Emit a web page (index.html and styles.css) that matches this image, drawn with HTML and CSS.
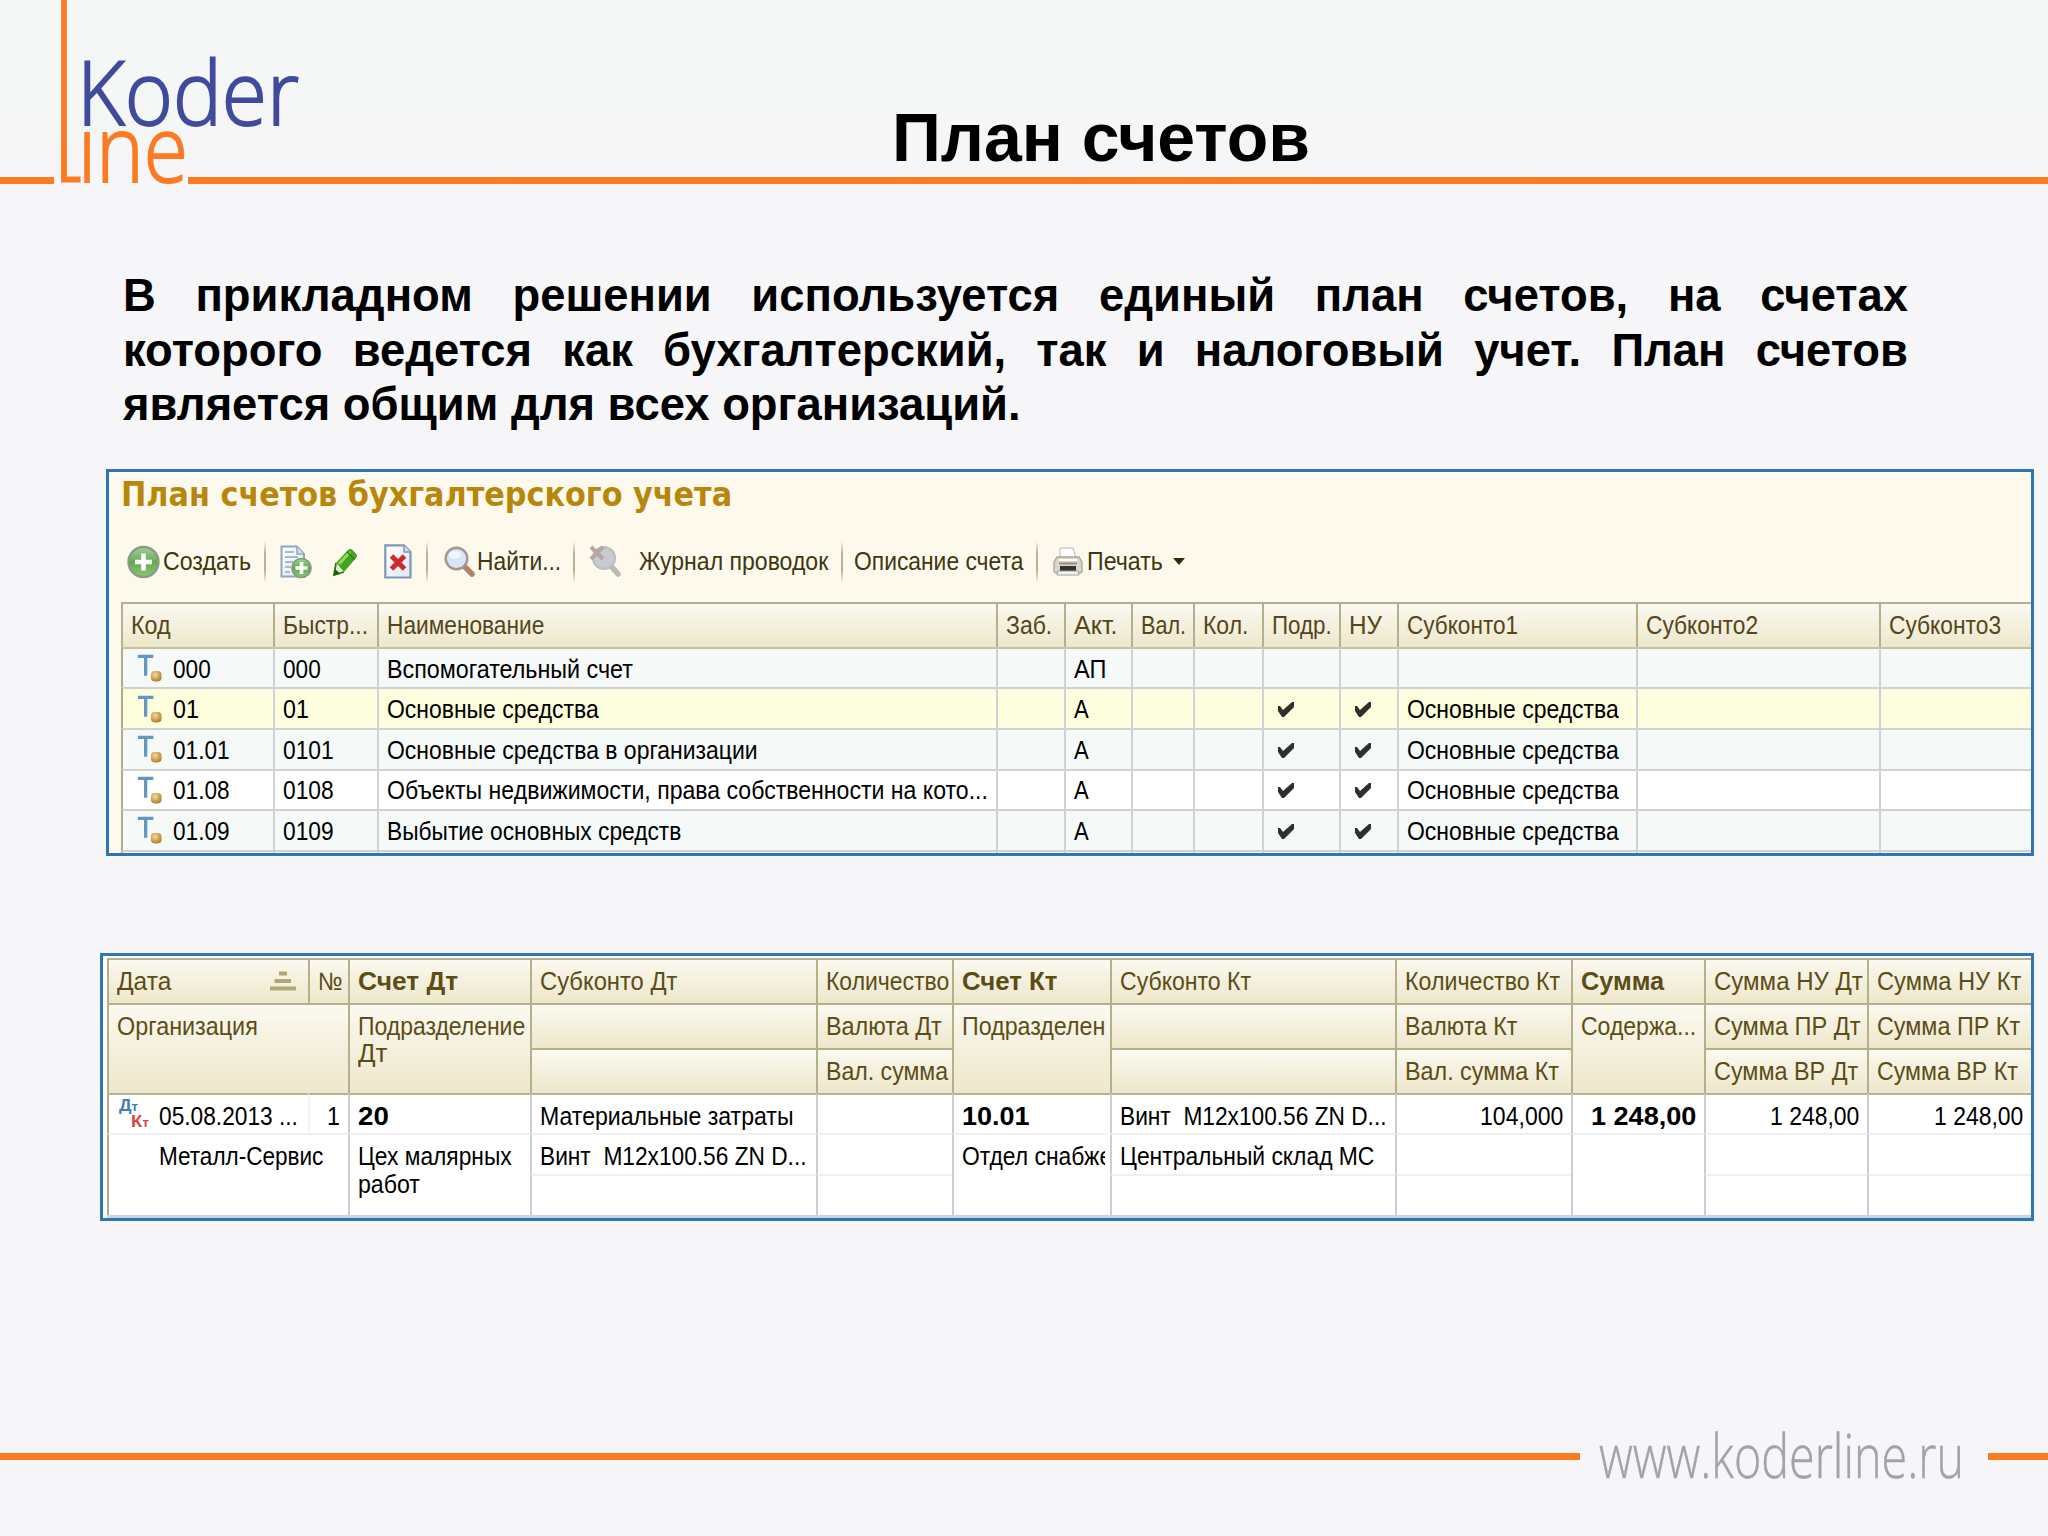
FILE: index.html
```html
<!DOCTYPE html>
<html lang="ru">
<head>
    <meta charset="UTF-8">
    <meta name="viewport" content="width=device-width, initial-scale=1.0">
    <title>План счетов</title>
    <link rel="stylesheet" href="styles.css">
</head>
<body>
    <!-- shared icons -->
    <svg class="defs" width="0" height="0">
        <defs>
            <linearGradient id="green" x1="0" y1="0" x2="0" y2="1">
                <stop offset="0" stop-color="#a9cf9c"/>
                <stop offset="0.5" stop-color="#63ab50"/>
                <stop offset="1" stop-color="#8cc67a"/>
            </linearGradient>
            <radialGradient id="gold" cx="0.4" cy="0.35" r="0.7">
                <stop offset="0" stop-color="#f6dc9a"/>
                <stop offset="1" stop-color="#b07a24"/>
            </radialGradient>
            <linearGradient id="paper" x1="0" y1="0" x2="1" y2="1">
                <stop offset="0" stop-color="#ffffff"/>
                <stop offset="1" stop-color="#dfe8f4"/>
            </linearGradient>
        </defs>
        <symbol id="account" viewBox="0 0 26 28">
            <path d="M1 2H17M9 2V22" stroke="#6497bd" stroke-width="3.4" fill="none"/>
            <rect x="14.5" y="17" width="11" height="11" rx="4" fill="url(#gold)"/>
        </symbol>
        <symbol id="check" viewBox="0 0 16 15">
            <path d="M0 4L2 4L5 8L14 0H16V5L6 15H4L0 9Z" fill="#2f2f2c"/>
        </symbol>
    </svg>

    <header class="header">
        <svg class="logo" width="320" height="190" viewBox="0 0 320 190">
            <path d="M0 180.5H54M188 180.5H320" stroke="#fb7a22" stroke-width="7"/>
            <path d="M64 0V179.5H80.5" stroke="#fb7a22" stroke-width="5.8" fill="none"/>
            <text class="logo-koder" x="77" y="125" textLength="222" lengthAdjust="spacingAndGlyphs">Koder</text>
            <text class="logo-ine" x="78" y="182" textLength="110" lengthAdjust="spacingAndGlyphs">ıne</text>
        </svg>
        <h1 class="title">План счетов</h1>
    </header>

    <main class="content">
        <p class="intro">
            <span>В прикладном решении используется единый план счетов, на счетах</span>
            <span>которого ведется как бухгалтерский, так и налоговый учет. План счетов</span>
            <span>является общим для всех организаций.</span>
        </p>

        <section class="panel accounts">
            <h2 class="panel-title"><span data-w="611">План счетов бухгалтерского учета</span></h2>

            <div class="toolbar">
                <div class="tool create">
                    <svg width="33" height="34" viewBox="0 0 33 34">
                        <circle cx="16.5" cy="17" r="15" fill="url(#green)" stroke="#8a9a84" stroke-width="2.4"/>
                        <path d="M16.5 8.5V25.5M8 17H25" stroke="#fff" stroke-width="4.6"/>
                    </svg>
                    <span data-w="88">Создать</span>
                </div>
                <i class="sep"></i>
                <div class="tool copy">
                    <svg width="32" height="34" viewBox="0 0 32 34">
                        <path d="M1.5 1.5H17L24 9V31.5H1.5Z" fill="url(#paper)" stroke="#8fa7bd" stroke-width="2"/>
                        <path d="M17 1.5V9H24" fill="#cddbea" stroke="#8fa7bd" stroke-width="1.5"/>
                        <path d="M5 7H14M5 12H18M5 17H13M5 22H11M5 27H10" stroke="#a9b9ca" stroke-width="1.8"/>
                        <circle cx="21.5" cy="23" r="9.5" fill="url(#green)" stroke="#7f9878" stroke-width="1.6"/>
                        <path d="M21.5 17V29M15.5 23H27.5" stroke="#fff" stroke-width="3.6"/>
                    </svg>
                </div>
                <div class="tool edit">
                    <svg width="25" height="28" viewBox="0 0 25 28">
                        <path d="M3 15L15 2Q17 0 19.5 2L23 5.5Q25 8 23 10L11 24Z" fill="#43a51f"/>
                        <path d="M6 16L17 4" stroke="#8ddb5c" stroke-width="3"/>
                        <path d="M14 3.5L21.5 11.5" stroke="#2f7d14" stroke-width="1.6"/>
                        <path d="M3 15L11 24L1 27Z" fill="#dff0cf"/>
                        <path d="M3 15L1 27L11 24" fill="none" stroke="#2c7a15" stroke-width="1.8"/>
                        <path d="M2 21L7 25.5L1 27.5Z" fill="#1d5a0c"/>
                    </svg>
                </div>
                <div class="tool delete">
                    <svg width="28" height="35" viewBox="0 0 28 35">
                        <path d="M1.3 1.3H20L26.5 8V33.5H1.3Z" fill="url(#paper)" stroke="#7d97b8" stroke-width="2.2"/>
                        <path d="M20 1.3V8H26.5" fill="#cddbea" stroke="#7d97b8" stroke-width="1.5"/>
                        <path d="M7.5 12L20.5 25M20.5 12L7.5 25" stroke="#cf2b2b" stroke-width="5"/>
                    </svg>
                </div>
                <i class="sep"></i>
                <div class="tool find">
                    <svg width="31" height="31" viewBox="0 0 31 31">
                        <path d="M20 20L28 28" stroke="#b08267" stroke-width="5.5" stroke-linecap="round"/>
                        <circle cx="12.5" cy="12.5" r="10.8" fill="#d6e6f8" stroke="#a9948f" stroke-width="2.4"/>
                        <ellipse cx="11" cy="9" rx="6" ry="4" fill="#eef6fe"/>
                    </svg>
                    <span data-w="84">Найти...</span>
                </div>
                <i class="sep"></i>
                <div class="tool find-off">
                    <svg width="33" height="33" viewBox="0 0 33 33">
                        <path d="M22 21L29 29" stroke="#bab9b2" stroke-width="5.5" stroke-linecap="round"/>
                        <circle cx="15" cy="13" r="11" fill="#c7cbd2" stroke="#bdbdba" stroke-width="2"/>
                        <path d="M2 2L14 14M14 2L2 14" stroke="#b8a3a6" stroke-width="4"/>
                    </svg>
                </div>
                <div class="tool journal"><span data-w="189">Журнал проводок</span></div>
                <i class="sep"></i>
                <div class="tool about"><span data-w="169">Описание счета</span></div>
                <i class="sep"></i>
                <div class="tool print">
                    <svg width="30" height="29" viewBox="0 0 30 29">
                        <path d="M7 1H20L23 11H7Z" fill="#fff" stroke="#b5b5b5"/>
                        <path d="M4 10H26L29 15V24Q29 26 26 26H4Q1 26 1 24V15Z" fill="#d9d5cb" stroke="#aaa69e" stroke-width="1.3"/>
                        <path d="M6 13H24" stroke="#fff" stroke-width="2"/>
                        <path d="M6 16.5H24" stroke="#a08c80" stroke-width="2"/>
                        <rect x="7" y="19" width="16" height="5" fill="#333"/>
                        <path d="M5 24H25L26 28H4Z" fill="#f3f3f3" stroke="#9c9c9c"/>
                    </svg>
                    <span data-w="76">Печать</span>
                    <i class="caret"></i>
                </div>
            </div>

            <div class="accounts-table">
                <div class="row head">
                    <div><span data-w="40">Код</span></div>
                    <div><span data-w="85">Быстр...</span></div>
                    <div><span data-w="157">Наименование</span></div>
                    <div><span data-w="46">Заб.</span></div>
                    <div><span data-w="44">Акт.</span></div>
                    <div><span data-w="45">Вал.</span></div>
                    <div><span data-w="45">Кол.</span></div>
                    <div><span data-w="60">Подр.</span></div>
                    <div><span data-w="33">НУ</span></div>
                    <div><span data-w="111">Субконто1</span></div>
                    <div><span data-w="112">Субконто2</span></div>
                    <div><span data-w="112">Субконто3</span></div>
                </div>
                <div class="row">
                    <div class="code"><svg><use href="#account"/></svg><span data-w="38">000</span></div>
                    <div><span data-w="38">000</span></div>
                    <div><span data-w="246">Вспомогательный счет</span></div>
                    <div></div>
                    <div><span data-w="32">АП</span></div>
                    <div></div><div></div><div></div><div></div><div></div><div></div><div></div>
                </div>
                <div class="row selected">
                    <div class="code"><svg><use href="#account"/></svg><span data-w="26">01</span></div>
                    <div><span data-w="26">01</span></div>
                    <div><span data-w="212">Основные средства</span></div>
                    <div></div>
                    <div><span data-w="15">А</span></div>
                    <div></div><div></div>
                    <div class="mark"><svg><use href="#check"/></svg></div>
                    <div class="mark"><svg><use href="#check"/></svg></div>
                    <div><span data-w="212">Основные средства</span></div>
                    <div></div><div></div>
                </div>
                <div class="row">
                    <div class="code"><svg><use href="#account"/></svg><span data-w="57">01.01</span></div>
                    <div><span data-w="51">0101</span></div>
                    <div><span data-w="371">Основные средства в организации</span></div>
                    <div></div>
                    <div><span data-w="15">А</span></div>
                    <div></div><div></div>
                    <div class="mark"><svg><use href="#check"/></svg></div>
                    <div class="mark"><svg><use href="#check"/></svg></div>
                    <div><span data-w="212">Основные средства</span></div>
                    <div></div><div></div>
                </div>
                <div class="row white">
                    <div class="code"><svg><use href="#account"/></svg><span data-w="57">01.08</span></div>
                    <div><span data-w="51">0108</span></div>
                    <div><span data-w="601">Объекты недвижимости, права собственности на кото...</span></div>
                    <div></div>
                    <div><span data-w="15">А</span></div>
                    <div></div><div></div>
                    <div class="mark"><svg><use href="#check"/></svg></div>
                    <div class="mark"><svg><use href="#check"/></svg></div>
                    <div><span data-w="212">Основные средства</span></div>
                    <div></div><div></div>
                </div>
                <div class="row">
                    <div class="code"><svg><use href="#account"/></svg><span data-w="57">01.09</span></div>
                    <div><span data-w="51">0109</span></div>
                    <div><span data-w="294">Выбытие основных средств</span></div>
                    <div></div>
                    <div><span data-w="15">А</span></div>
                    <div></div><div></div>
                    <div class="mark"><svg><use href="#check"/></svg></div>
                    <div class="mark"><svg><use href="#check"/></svg></div>
                    <div><span data-w="212">Основные средства</span></div>
                    <div></div><div></div>
                </div>
                <!-- top edge of the next row, cut by the panel -->
                <div class="row cut">
                    <div></div><div></div><div></div><div></div><div></div><div></div>
                    <div></div><div></div><div></div><div></div><div></div><div></div>
                </div>
            </div>
        </section>

        <section class="panel entries">
            <div class="entries-table">
                <div class="h sort"><span data-w="54">Дата</span>
                    <svg width="26" height="20" viewBox="0 0 26 20"><path d="M9 2.5H17M4.5 10H21M0 17.5H26" stroke="#aea878" stroke-width="4"/></svg>
                </div>
                <div class="h"><span data-w="25">№</span></div>
                <div class="h bold"><span data-w="100">Счет Дт</span></div>
                <div class="h"><span data-w="137">Субконто Дт</span></div>
                <div class="h"><span data-w="123">Количество</span></div>
                <div class="h bold"><span data-w="96">Счет Кт</span></div>
                <div class="h"><span data-w="131">Субконто Кт</span></div>
                <div class="h"><span data-w="155">Количество Кт</span></div>
                <div class="h bold"><span data-w="83">Сумма</span></div>
                <div class="h"><span data-w="149">Сумма НУ Дт</span></div>
                <div class="h"><span data-w="144">Сумма НУ Кт</span></div>

                <div class="h wide tall"><span data-w="141">Организация</span></div>
                <div class="h tall"><span data-w="167">Подразделение</span><span data-w="29">Дт</span></div>
                <div class="h"></div>
                <div class="h"><span data-w="116">Валюта Дт</span></div>
                <div class="h tall"><span data-w="143">Подразделен</span></div>
                <div class="h"></div>
                <div class="h"><span data-w="112">Валюта Кт</span></div>
                <div class="h tall"><span data-w="115">Содержа...</span></div>
                <div class="h"><span data-w="146">Сумма ПР Дт</span></div>
                <div class="h"><span data-w="143">Сумма ПР Кт</span></div>

                <div class="h"></div>
                <div class="h"><span data-w="122">Вал. сумма</span></div>
                <div class="h"></div>
                <div class="h"><span data-w="154">Вал. сумма Кт</span></div>
                <div class="h"><span data-w="144">Сумма ВР Дт</span></div>
                <div class="h"><span data-w="141">Сумма ВР Кт</span></div>

                <div class="d first date">
                    <svg width="31" height="31" viewBox="0 0 31 31">
                        <text class="dt" x="0" y="12" textLength="19" lengthAdjust="spacingAndGlyphs">Д<tspan class="sub">т</tspan></text>
                        <text class="kt" x="12" y="28" textLength="18" lengthAdjust="spacingAndGlyphs">К<tspan class="sub">т</tspan></text>
                    </svg>
                    <span data-w="139">05.08.2013 ...</span>
                </div>
                <div class="d first num faint"><span data-w="13">1</span></div>
                <div class="d first bold"><span data-w="31">20</span></div>
                <div class="d first"><span data-w="254">Материальные затраты</span></div>
                <div class="d first"></div>
                <div class="d first bold"><span data-w="68">10.01</span></div>
                <div class="d first"><span data-w="267">Винт&nbsp; M12x100.56 ZN D...</span></div>
                <div class="d first num"><span data-w="83">104,000</span></div>
                <div class="d first num bold"><span data-w="105">1 248,00</span></div>
                <div class="d first num"><span data-w="89">1 248,00</span></div>
                <div class="d first num"><span data-w="89">1 248,00</span></div>

                <div class="d wide tall org"><span data-w="164">Металл-Сервис</span></div>
                <div class="d tall"><span data-w="154">Цех малярных</span><span data-w="62">работ</span></div>
                <div class="d"><span data-w="267">Винт&nbsp; M12x100.56 ZN D...</span></div>
                <div class="d"></div>
                <div class="d tall clip"><span data-w="150">Отдел снабже</span></div>
                <div class="d"><span data-w="254">Центральный склад МС</span></div>
                <div class="d"></div>
                <div class="d tall"></div>
                <div class="d"></div>
                <div class="d"></div>

                <div class="d"></div>
                <div class="d"></div>
                <div class="d"></div>
                <div class="d"></div>
                <div class="d"></div>
                <div class="d"></div>
            </div>
        </section>
    </main>

    <footer class="footer">
        <i class="line left"></i>
        <svg class="site" width="408" height="80" viewBox="0 0 408 80">
            <text x="19" y="62" textLength="365" lengthAdjust="spacingAndGlyphs">www.koderline.ru</text>
        </svg>
        <i class="line right"></i>
    </footer>

    <script>
    // squeeze every label to its column text width
    document.querySelectorAll('[data-w]').forEach(label => {
        const scale = label.dataset.w / label.offsetWidth;
        label.style.transform = `scaleX(${scale})`;
    });
    </script>
</body>
</html>
```
FILE: styles.css
```css
* {
    box-sizing: border-box;
}

body {
    margin: 0;
    width: 2048px;
    height: 1536px;
    overflow: hidden;
    display: flex;
    flex-direction: column;
    background: #f6f5f8;
    font-family: "Liberation Sans", Arial, sans-serif;
    color: #000;
}

.defs {
    position: absolute;
}

svg {
    display: block;
    flex: none;
    overflow: visible;
}

/* header */
.header {
    display: flex;
    height: 190px;
    background: linear-gradient(#f5f6f6 60%, #f6f5f8);
}

.logo text {
    font-family: "Open Sans", sans-serif;
    font-weight: 300;
}

.logo-koder {
    font-size: 89px;
    fill: #414b9c;
    stroke: #414b9c;
    stroke-width: 1.8px;
}

.logo-ine {
    font-size: 92px;
    fill: #fb7a22;
    stroke: #fb7a22;
    stroke-width: 1.8px;
}

.title {
    flex: 1;
    height: 184px;
    margin: 0;
    padding: 98px 166px 0 0;
    border-bottom: 7px solid #fb7a22;
    font-size: 68px;
    line-height: 78px;
    text-align: center;
}

/* intro */
.content {
    flex: 1;
}

.intro {
    width: 1785px;
    margin: 79px 0 0 123px;
    font-size: 45.4px;
    font-weight: bold;
    line-height: 54.6px;
}

.intro span {
    display: block;
    text-align-last: justify;
}

.intro span:last-child {
    text-align-last: left;
}

/* panels */
.panel {
    border: 3px solid #2f75b5;
    font-size: 25px;
    line-height: 27px;
    white-space: nowrap;
    overflow: hidden;
}

.panel span {
    display: inline-block;
    transform-origin: left;
}

.accounts {
    width: 1928px;
    height: 387px;
    margin: 36px 0 0 106px;
    padding-left: 12px;
    background: #fdfaed;
}

.panel-title {
    height: 50px;
    margin: 0;
    padding-top: 2px;
    font-family: "DejaVu Sans Condensed", "DejaVu Sans", sans-serif;
    font-size: 34px;
    line-height: 41px;
    font-weight: bold;
    color: #b8860b;
}

/* toolbar */
.toolbar {
    display: flex;
    align-items: center;
    height: 80px;
    padding-left: 6px;
    color: #40360f;
}

.tool {
    display: flex;
    align-items: center;
    flex: none;
}

.sep {
    flex: none;
    width: 2px;
    height: 42px;
    background: linear-gradient(transparent, #b5b296 30%, #b5b296 70%, transparent);
}

.create {
    width: 137px;
    gap: 3px;
}

.copy {
    width: 67px;
    padding-left: 14px;
}

.edit {
    width: 51px;
}

.delete {
    width: 42px;
}

.find {
    width: 145px;
    padding-left: 16px;
    gap: 2px;
}

.find-off {
    width: 64px;
    padding-left: 14px;
}

.journal {
    width: 202px;
}

.about {
    width: 193px;
    padding-left: 11px;
}

.print {
    padding-left: 15px;
    gap: 4px;
}

.print span {
    width: 82px;
}

.caret {
    border: 6px solid transparent;
    border-top: 7px solid #33290a;
    border-bottom: 0;
}

/* chart of accounts */
.row {
    display: grid;
    grid-template-columns: 152px 104px 619px 68px 67px 62px 69px 77px 58px 239px 243px 152px;
    height: 40.6px;
    background: #f5f9f8;
}

.row > div {
    display: flex;
    align-items: center;
    padding: 2px 0 0 8px;
    border-left: 2px solid #cfd1d2;
    border-top: 2px solid #cfd1d2;
    overflow: hidden;
}

.row > div:first-child {
    border-left-color: #b1ac85;
}

.row.head {
    height: 45px;
    background: linear-gradient(#fbfaf3, #ede7ca);
    color: #54461a;
}

.row.head > div {
    padding-top: 0;
    border-color: #b5b08c;
}

.row.head + .row > div {
    border-top-color: #c4c0a2;
}

.row.selected {
    background: #fdfede;
}

.row.white {
    background: #fff;
}

.row.cut {
    height: 5px;
}

.row .code {
    gap: 11px;
    padding-left: 14px;
}

.code svg {
    width: 25px;
    height: 28px;
    margin-top: -2px;
}

.row .mark {
    padding-left: 14px;
}

.mark svg {
    width: 16px;
    height: 15px;
}

/* postings */
.entries {
    width: 1934px;
    height: 268px;
    margin: 97px 0 0 100px;
    padding: 2px 0 0 4px;
    background: #fff;
}

.entries-table {
    display: grid;
    grid-template-columns: 201px 40px 182px 286px 136px 158px 285px 176px 133px 163px 164px;
    grid-template-rows: 45px 45px 45px 40.5px 40.5px 41px;
    border-bottom: 3px solid #c3d5ea;
}

.h,
.d {
    padding: 8px 0 0 8px;
    border-left: 2px solid #b5b08c;
    border-top: 2px solid #b5b08c;
    overflow: hidden;
}

.h {
    background: linear-gradient(#fbf9f0, #eee7cb);
    color: #5c4d17;
}

.h span,
.d span {
    display: block;
    width: max-content;
}

.d {
    padding-top: 7px;
    border-left-color: #cdced3;
    border-top-color: #f0f0f2;
    line-height: 28px;
}

.d.first {
    border-top-color: #b9b48f;
}

.d.faint {
    border-left-color: #f4f4f6;
}

.bold {
    font-weight: bold;
}

.wide {
    grid-column: span 2;
}

.tall {
    grid-row: span 2;
}

.sort {
    display: flex;
    justify-content: space-between;
    padding-right: 12px;
}

.sort svg {
    margin-top: 3px;
}

.d.date,
.d.org {
    border-left-color: #b1ac85;
}

.date {
    display: flex;
    gap: 9px;
    padding-left: 10px;
}

.date svg {
    margin-top: -3px;
}

.date text {
    font-size: 16px;
    font-weight: bold;
}

.date .sub {
    font-size: 12px;
}

.dt {
    fill: #3f7fb0;
}

.kt {
    fill: #d9483f;
}

.org {
    padding-left: 50px;
}

.num {
    display: flex;
    justify-content: flex-end;
    padding-right: 8px;
}

.panel .num span {
    transform-origin: right;
}

.clip {
    border-right: 5px solid #fff;
}

/* footer */
.footer {
    display: flex;
    height: 120px;
}

.line {
    height: 7px;
    margin-top: 37px;
    background: #fb7a22;
}

.left {
    width: 1580px;
}

.right {
    flex: 1;
}

.site text {
    font-family: "Open Sans", sans-serif;
    font-weight: 300;
    font-size: 60px;
    fill: #a5a1a7;
    stroke: #a5a1a7;
    stroke-width: 0.4px;
}
```
